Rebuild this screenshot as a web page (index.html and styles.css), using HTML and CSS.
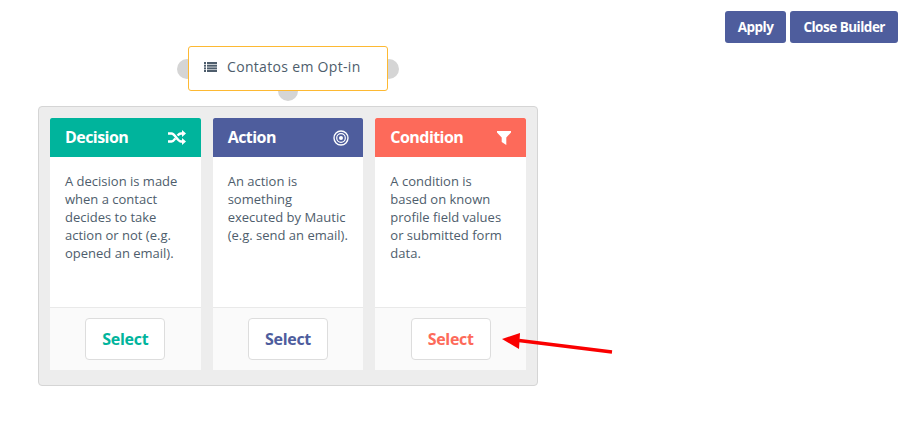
FILE: index.html
```html
<!DOCTYPE html>
<html lang="en">
<head>
<meta charset="utf-8">
<title>Campaign Builder</title>
<link rel="stylesheet" href="styles.css">
</head>
<body>
<div class="page">
  <div class="toolbar">
    <button class="tool-btn">Apply</button>
    <button class="tool-btn">Close Builder</button>
  </div>
  <div class="node-wrap">
    <span class="endpoint endpoint-left"></span>
    <span class="endpoint endpoint-right"></span>
    <span class="endpoint endpoint-bottom"></span>
    <div class="node">
      <svg class="node-icon" viewBox="0 0 13 10" width="13" height="10"><g fill="#4e5d6c"><rect x="0" y="0" width="2" height="2"/><rect x="0" y="2.7" width="2" height="2"/><rect x="0" y="5.4" width="2" height="2"/><rect x="0" y="8" width="2" height="2"/><rect x="3" y="0" width="10" height="2"/><rect x="3" y="2.7" width="10" height="2"/><rect x="3" y="5.4" width="10" height="2"/><rect x="3" y="8" width="10" height="2"/></g></svg>
      <span>Contatos em Opt-in</span>
    </div>
  </div>
  <div class="panel">
    <section class="card card-decision">
      <header class="card-head">
        <h3>Decision</h3>
        <svg viewBox="0 0 18 15" width="18" height="15" fill="none" stroke="#fff" stroke-width="2.300"><path d="M0 3.500h3.500c3.500 0 6 8 9.500 8h2M0 11.500h3.500c1.500 0 2.700-1.500 3.800-3M9.500 5.500c1-1 2.200-2 3.500-2h2"/><path d="M14 0l4 3.500-4 3.500zM14 8l4 3.500-4 3.500z" fill="#fff" stroke="none"/></svg>
      </header>
      <p class="card-body">A decision is made when a contact decides to take action or not (e.g. opened an email).</p>
      <footer class="card-foot"><button class="select-btn">Select</button></footer>
    </section>
    <section class="card card-action">
      <header class="card-head head-target">
        <h3>Action</h3>
        <svg viewBox="0 0 16 16" width="16" height="16" fill="none" stroke="#fff"><circle cx="8" cy="8" r="7" stroke-width="1.400"/><circle cx="8" cy="8" r="4.300" stroke-width="1.200"/><circle cx="8" cy="8" r="2" fill="#fff" stroke="none"/></svg>
      </header>
      <p class="card-body">An action is something executed by Mautic (e.g. send an email).</p>
      <footer class="card-foot"><button class="select-btn">Select</button></footer>
    </section>
    <section class="card card-condition">
      <header class="card-head">
        <h3>Condition</h3>
        <svg viewBox="0 0 14 14" width="14" height="14"><path d="M0 0h14v1.500L9.300 6.500V14L4.700 11V6.500L0 1.500z" fill="#fff"/></svg>
      </header>
      <p class="card-body">A condition is based on known profile field values or submitted form data.</p>
      <footer class="card-foot"><button class="select-btn">Select</button></footer>
    </section>
  </div>
  <svg class="arrow" viewBox="0 0 120 30" width="120" height="30"><path d="M19 10.500L112 22" stroke="#fa0000" stroke-width="3.500" fill="none"/><path d="M2 9L20 3L19 19z" fill="#fa0000"/></svg>
</div>
</body>
</html>
```

FILE: styles.css
```css
* { box-sizing: border-box; }
html, body { margin: 0; padding: 0; background: #fff; }
body { font-family: "Open Sans", "Liberation Sans", sans-serif; color: #4e5d6c; }
.page { position: relative; width: 912px; height: 425px; overflow: hidden; padding-top: 11px; }
.toolbar { display: flex; justify-content: flex-end; gap: 4px; padding-right: 14px; height: 32px; }
.tool-btn {
  font: 700 13.5px/18px "Open Sans", sans-serif; letter-spacing: -0.5px; color: #fff; background: #4e5d9d;
  border: 0; border-radius: 3px; padding: 0 13px; height: 32px;
}
.node-wrap { position: relative; width: 200px; height: 45px; margin: 3px 0 0 188px; }
.node {
  position: relative; display: flex; align-items: center; gap: 10px; height: 45px;
  padding: 0 15px 4px 16px; background: #fff; border: 1px solid #fdb933; border-radius: 3px;
  font-size: 14px; letter-spacing: 0.32px; line-height: 18px; white-space: nowrap;
}
.node-icon { flex: none; margin-left: -1px; }
.endpoint { position: absolute; width: 20px; height: 20px; border-radius: 50%; background: #d5d5d5; }
.endpoint-left { left: -11px; top: 13px; }
.endpoint-right { right: -11px; top: 13px; }
.endpoint-bottom { left: 90px; bottom: -10px; }
.panel {
  display: flex; gap: 12px; width: 500px; height: 280px; margin: 15px 0 0 38px; padding: 11px 11px 15px;
  background: #ededed; border: 1px solid #d5d5d5; border-radius: 4px;
}
.card { display: flex; flex-direction: column; width: 151px; flex: 1 1 0; background: #fff; }
.card-head {
  display: flex; align-items: center; justify-content: space-between; height: 39px;
  padding: 0 15px; color: #fff; border-radius: 2px 2px 0 0;
}
.head-target { padding-right: 14px; }
.card-head h3 { margin: 0 0 2px; font-size: 16px; letter-spacing: -0.55px; line-height: 20px; font-weight: 700; }
.card-body { flex: 1; margin: 0; padding: 15px 15px 0; font-size: 13px; line-height: 18px; }
.card-foot {
  display: flex; justify-content: center; align-items: center; height: 63px;
  background: #fafafa; border-top: 1px solid #e9e9e9;
}
.select-btn {
  width: 80px; height: 42px; padding: 0; background: #fff; border: 1px solid #dddddd; border-radius: 4px;
  font: 700 16px/20px "Open Sans", sans-serif; letter-spacing: -0.3px;
}
.card-decision .card-head { background: #00b49c; }
.card-decision .select-btn { color: #00b49c; }
.card-action .card-head { background: #4e5d9d; }
.card-action .select-btn { color: #4e5d9d; }
.card-condition .card-head { background: #fd6a5a; }
.card-condition .select-btn { color: #fd6a5a; }
.arrow { position: absolute; left: 500px; top: 330px; }
```
